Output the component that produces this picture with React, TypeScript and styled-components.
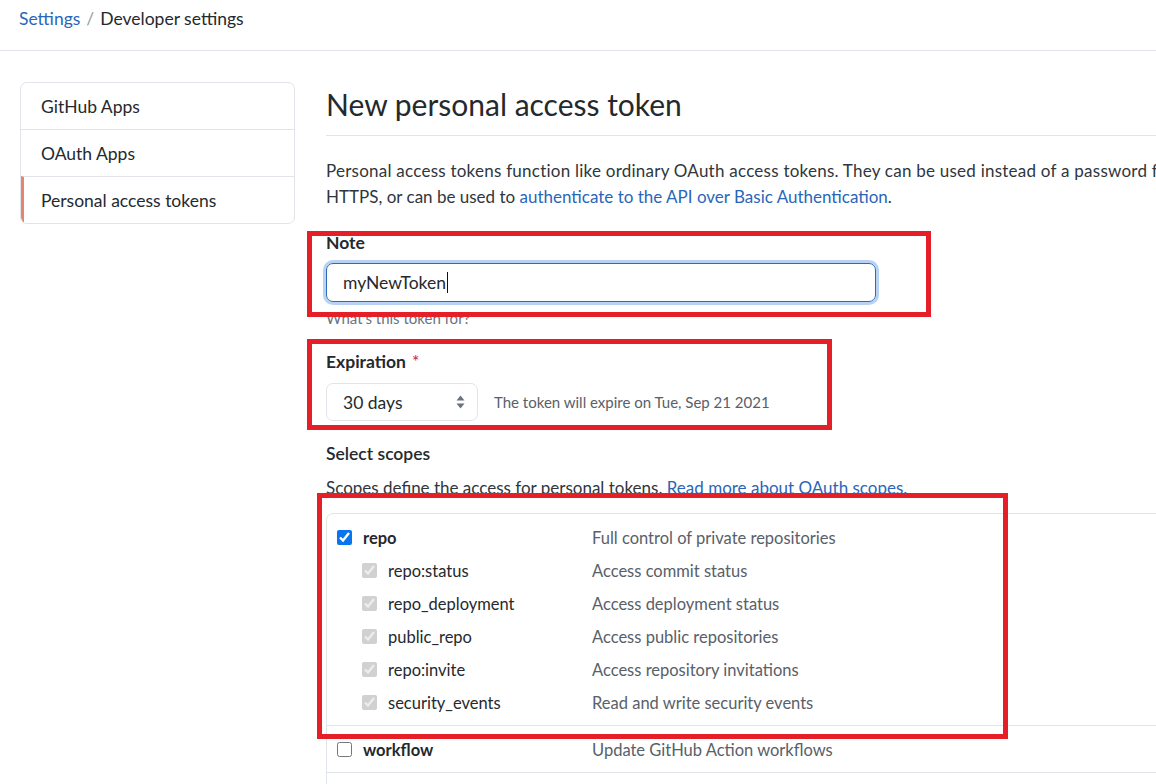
import React from "react";
import styled, { createGlobalStyle } from "styled-components";

const Global = createGlobalStyle`
  html, body { margin: 0; padding: 0; background: #fff; }
  body {
    width: 1156px;
    height: 784px;
    overflow: hidden;
    font-family: Lato, "Noto Sans", sans-serif;
    color: #24292e;
  }
`;

const Page = styled.div`
  position: relative;
  width: 1156px;
  height: 784px;
  overflow: hidden;
`;

const Header = styled.header`
  height: 51px;
  border-bottom: 1px solid #e1e4e8;
  padding: 6px 19px 0;
  box-sizing: border-box;
  font-size: 17.5px;
  line-height: 26px;
  display: flex;
  align-items: flex-start;
`;

const Crumb = styled.a`
  color: #2a66b8;
  text-decoration: none;
`;

const CrumbSep = styled.span`
  color: #959da5;
  margin: 0 6px;
`;

const CrumbCurrent = styled.span`
  color: #24292e;
`;

const Body = styled.div`
  display: flex;
  align-items: flex-start;
  padding: 31px 0 0 20px;
  gap: 31px;
`;

const SideNav = styled.nav`
  width: 275px;
  flex: none;
  box-sizing: border-box;
  border: 1px solid #e1e4e8;
  border-radius: 7px;
  overflow: hidden;
`;

const NavItem = styled.a<{ $active?: boolean }>`
  display: flex;
  align-items: center;
  height: 47px;
  box-sizing: border-box;
  padding-left: ${(p) => (p.$active ? "17px" : "20px")};
  border-left: ${(p) => (p.$active ? "3px solid #e8836f" : "none")};
  border-top: 1px solid #e1e4e8;
  font-size: 17.5px;
  color: #24292e;
  text-decoration: none;
  &:first-child { border-top: none; height: 46px; }
`;

const Main = styled.main`
  width: 960px;
  flex: none;
  display: flex;
  flex-direction: column;
  align-items: flex-start;
`;

const Subhead = styled.h2`
  align-self: stretch;
  margin: 0;
  padding-bottom: 8px;
  border-bottom: 1px solid #e1e4e8;
  font-size: 30px;
  line-height: 45px;
  font-weight: 400;
  color: #24292e;
`;

const Lead = styled.p`
  margin: 22px 0 0;
  font-size: 17px;
  line-height: 26px;
  color: #2f363d;
  white-space: nowrap;
`;

const LeadLine = styled.span`
  letter-spacing: 0.24px;
`;

const Link = styled.a`
  color: #2a66b8;
  text-decoration: none;
`;

const Field = styled.div<{ $mt: number }>`
  position: relative;
  display: flex;
  flex-direction: column;
  align-items: flex-start;
  margin-top: ${(p) => p.$mt}px;
`;

const Label = styled.label`
  font-size: 17.5px;
  line-height: 26px;
  font-weight: 700;
  color: #24292e;
`;

const Required = styled.span`
  color: #cb2431;
  margin-left: 6px;
  font-weight: 400;
`;

const TextInput = styled.div`
  margin-top: 7px;
  width: 550px;
  height: 39px;
  box-sizing: border-box;
  border: 1px solid #2b6cb8;
  border-radius: 7px;
  box-shadow: 0 0 0 3px #b7d2f2;
  padding-left: 16px;
  display: flex;
  align-items: center;
  font-size: 17.5px;
  color: #24292e;
`;

const Caret = styled.span`
  display: inline-block;
  width: 1px;
  height: 21px;
  background: #111;
  margin-left: 1px;
`;

const Help = styled.p`
  margin: 6px 0 0;
  font-size: 15px;
  line-height: 20px;
  color: #6a737d;
`;

const SelectRow = styled.div`
  margin-top: 8px;
  display: flex;
  align-items: center;
  gap: 16px;
`;

const SelectBox = styled.div`
  width: 152px;
  height: 38px;
  box-sizing: border-box;
  border: 1px solid #e1e4e8;
  border-radius: 7px;
  padding: 0 12px 0 16px;
  display: flex;
  align-items: center;
  justify-content: space-between;
  font-size: 17.5px;
  color: #24292e;
  background: #fff;
`;

const SelectNote = styled.span`
  font-size: 15px;
  color: #586069;
`;

const SectionTitle = styled.h3`
  margin: 20px 0 0;
  font-size: 17.5px;
  line-height: 26px;
  font-weight: 600;
  color: #24292e;
`;

const ScopeDesc = styled.p`
  margin: 8px 0 0;
  font-size: 17px;
  line-height: 26px;
  color: #2f363d;
`;

const ScopeTable = styled.div`
  position: relative;
  margin-top: 12px;
  align-self: stretch;
  border: 1px solid #e1e4e8;
  border-radius: 7px 0 0 0;
  height: 300px;
`;

const ScopeGroup = styled.div`
  padding: 7px 0 6px;
  border-bottom: 1px solid #e1e4e8;
`;

const ScopeRow = styled.div`
  display: grid;
  grid-template-columns: 255px 1fr;
  align-items: center;
  height: 33px;
  padding-left: 10px;
`;

const ScopeName = styled.label<{ $sub?: boolean }>`
  display: flex;
  align-items: center;
  gap: 11px;
  padding-left: ${(p) => (p.$sub ? "25px" : "0")};
  font-size: 16.5px;
  font-weight: ${(p) => (p.$sub ? 400 : 700)};
  color: #24292e;
`;

const Check = styled.input`
  width: 15px;
  height: 15px;
  margin: 0;
  accent-color: #0a74f0;
`;

const ScopeText = styled.span`
  font-size: 16.5px;
  color: #586069;
`;

const Annotation = styled.div<{ $l: number; $t: number; $w: number; $h: number }>`
  position: absolute;
  left: ${(p) => p.$l}px;
  top: ${(p) => p.$t}px;
  width: ${(p) => p.$w}px;
  height: ${(p) => p.$h}px;
  box-sizing: border-box;
  border: 5px solid #e41f27;
  pointer-events: none;
  z-index: 5;
`;

const SortIcon = () => (
  <svg width="9" height="16" viewBox="0 0 9 16" aria-hidden="true">
    <path d="M0.5 6.5 L4.5 1.5 L8.5 6.5 Z" fill="#6a737d" />
    <path d="M0.5 9.5 L4.5 14.5 L8.5 9.5 Z" fill="#6a737d" />
  </svg>
);

type Scope = { name: string; desc: string };

const repoSubs: Scope[] = [
  { name: "repo:status", desc: "Access commit status" },
  { name: "repo_deployment", desc: "Access deployment status" },
  { name: "public_repo", desc: "Access public repositories" },
  { name: "repo:invite", desc: "Access repository invitations" },
  { name: "security_events", desc: "Read and write security events" },
];

export default function App() {
  return (
    <Page>
      <Global />
      <Header>
        <Crumb href="#">Settings</Crumb>
        <CrumbSep>/</CrumbSep>
        <CrumbCurrent>Developer settings</CrumbCurrent>
      </Header>
      <Body>
        <SideNav>
          <NavItem href="#">GitHub Apps</NavItem>
          <NavItem href="#">OAuth Apps</NavItem>
          <NavItem href="#" $active>
            Personal access tokens
          </NavItem>
        </SideNav>
        <Main>
          <Subhead>New personal access token</Subhead>
          <Lead>
            <LeadLine>
              Personal access tokens function like ordinary OAuth access tokens. They can be used instead of a
              password for Git over
            </LeadLine>
            <br />
            HTTPS, or can be used to <Link href="#">authenticate to the API over Basic Authentication</Link>.
          </Lead>

          <Field $mt={20}>
            <Label>Note</Label>
            <TextInput>
              myNewToken
              <Caret />
            </TextInput>
            <Annotation $l={-19} $t={1} $w={624} $h={86} />
          </Field>
          <Help>What’s this token for?</Help>

          <Field $mt={21}>
            <Label>
              Expiration<Required>*</Required>
            </Label>
            <SelectRow>
              <SelectBox>
                <span>30 days</span>
                <SortIcon />
              </SelectBox>
              <SelectNote>The token will expire on Tue, Sep 21 2021</SelectNote>
            </SelectRow>
            <Annotation $l={-19} $t={-10} $w={525} $h={91} />
          </Field>

          <SectionTitle>Select scopes</SectionTitle>
          <ScopeDesc>
            Scopes define the access for personal tokens. <Link href="#">Read more about OAuth scopes.</Link>
          </ScopeDesc>

          <ScopeTable>
            <ScopeGroup>
              <ScopeRow>
                <ScopeName>
                  <Check type="checkbox" checked readOnly />
                  repo
                </ScopeName>
                <ScopeText>Full control of private repositories</ScopeText>
              </ScopeRow>
              {repoSubs.map((s) => (
                <ScopeRow key={s.name}>
                  <ScopeName $sub>
                    <Check type="checkbox" checked disabled readOnly />
                    {s.name}
                  </ScopeName>
                  <ScopeText>{s.desc}</ScopeText>
                </ScopeRow>
              ))}
            </ScopeGroup>
            <ScopeGroup>
              <ScopeRow>
                <ScopeName>
                  <Check type="checkbox" readOnly />
                  workflow
                </ScopeName>
                <ScopeText>Update GitHub Action workflows</ScopeText>
              </ScopeRow>
            </ScopeGroup>
            <Annotation $l={-10} $t={-21} $w={691} $h={246} />
          </ScopeTable>
        </Main>
      </Body>
    </Page>
  );
}
